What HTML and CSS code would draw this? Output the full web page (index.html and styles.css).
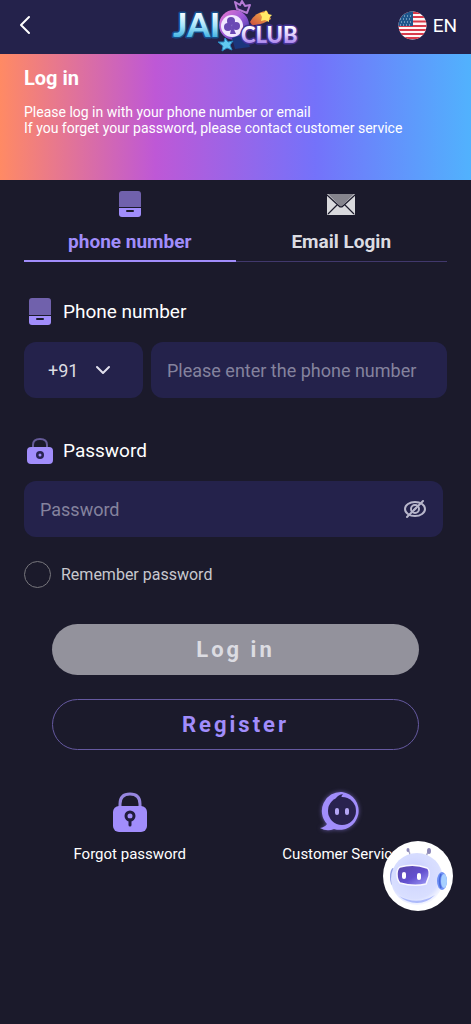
FILE: index.html
```html
<!DOCTYPE html>
<html lang="en">
<head>
    <meta charset="UTF-8">
    <meta name="viewport" content="width=device-width, initial-scale=1.0">
    <title>Log in</title>
    <link rel="stylesheet" href="styles.css">
</head>
<body>
    <header class="header">
        <button class="back-button" type="button" aria-label="Back">
            <svg width="20" height="20" viewBox="0 0 20 20"><path d="M15 2L7 10L15 18" fill="none" stroke="#fff" stroke-width="2" stroke-linecap="round" stroke-linejoin="round"/></svg>
        </button>
        <svg class="logo" width="132" height="54" viewBox="170 0 132 54" role="img" aria-label="JAIO Club">
            <defs>
                <linearGradient id="jai" x1="0" y1="0" x2="0" y2="1">
                    <stop offset="0.2" stop-color="#fff"/>
                    <stop offset="0.55" stop-color="#a5e4fb"/>
                    <stop offset="0.9" stop-color="#2ba6dc"/>
                </linearGradient>
                <linearGradient id="club" x1="0" y1="0" x2="0" y2="1">
                    <stop offset="0.2" stop-color="#fff"/>
                    <stop offset="0.55" stop-color="#dcc7fb"/>
                    <stop offset="0.9" stop-color="#9a70e8"/>
                </linearGradient>
                <linearGradient id="ring" x1="0" y1="0" x2="1" y2="1">
                    <stop offset="0" stop-color="#ee7bd0"/>
                    <stop offset="0.5" stop-color="#9b58d8"/>
                    <stop offset="1" stop-color="#27339a"/>
                </linearGradient>
                <linearGradient id="comet" x1="0" y1="1" x2="1" y2="0">
                    <stop offset="0" stop-color="#c94d40"/>
                    <stop offset="1" stop-color="#ffc247"/>
                </linearGradient>
            </defs>
            <path d="M237 9L235 2L240 5L242 1L245 6L250 5L247 13Z" fill="#292451" stroke="#b57bd6" stroke-width="2" stroke-linejoin="round"/>
            <path d="M250 22Q255 12 267 11L271 19Q263 25 252 25Z" fill="url(#comet)"/>
            <path d="M266 10L268 14L272 15L269 18L269 22L265 20L261 21L262 17L260 13L264 13Z" fill="#ffe967"/>
            <circle cx="234" cy="25" r="15" fill="url(#ring)"/>
            <circle cx="232" cy="26" r="11" fill="#f1e7ff"/>
            <g fill="#6a49b4">
                <circle cx="231" cy="21" r="4"/>
                <circle cx="228" cy="27" r="4"/>
                <circle cx="236" cy="26" r="4"/>
                <path d="M232 25L236 34H230Z"/>
            </g>
            <path d="M232 38L245 34L250 47L235 49Z" fill="#1b367d"/>
            <text class="logo-jai" x="173" y="37">JAI</text>
            <text class="logo-club" x="241" y="43">CLUB</text>
            <path d="M225 38L228 42L233 41L230 45L232 50L227 48L222 51L223 46L218 42L224 42Z" fill="#61c9f1" stroke="#2887c2"/>
        </svg>
        <button class="language-button" type="button">
            <svg width="29" height="29" viewBox="0 0 29 29" aria-hidden="true">
                <clipPath id="flag"><circle cx="14.5" cy="14.5" r="14"/></clipPath>
                <g clip-path="url(#flag)">
                    <path d="M0 0H29V29H0Z" fill="#fff5f5"/>
                    <path d="M0 2H29M0 6H29M0 10.500H29M0 15H29M0 19H29M0 23H29M0 27H29" stroke="#d83a4b" stroke-width="2.200"/>
                    <path d="M0 0H15V15H0Z" fill="#1e568c"/>
                    <path d="M3 5H14M2 8H14M3 11H14M2 14H14" stroke="#b9d4e8" stroke-width="1" stroke-dasharray="1 2"/>
                </g>
            </svg>
            <span>EN</span>
        </button>
    </header>

    <section class="banner">
        <h1>Log in</h1>
        <p>Please log in with your phone number or email</p>
        <p>If you forget your password, please contact customer service</p>
    </section>

    <main class="container">
        <div class="tabs" role="tablist">
            <button class="tab active" type="button" role="tab" aria-selected="true">
                <svg width="26" height="28" viewBox="0 0 26 28">
                    <path d="M2 17V4Q2 1 5 1H21Q24 1 24 4V17Z" fill="#7061ac"/>
                    <path d="M2 18H24V24Q24 27 21 27H5Q2 27 2 24Z" fill="#a18dfb"/>
                    <path d="M10 21H16" stroke="#1b1a2b" stroke-width="2" stroke-linecap="round"/>
                </svg>
                <span>phone number</span>
            </button>
            <button class="tab" type="button" role="tab" aria-selected="false">
                <svg width="30" height="28" viewBox="0 0 30 28">
                    <rect x="1" y="4" width="28" height="21" rx="1" fill="#d9d9dd"/>
                    <path d="M2 4H28L15 17Z" fill="#85848d"/>
                    <path d="M1 5L13 16Q15 18 17 16L29 5M2 24L11 15M28 24L19 15" fill="none" stroke="#1b1a2b" stroke-width="1.200"/>
                </svg>
                <span>Email Login</span>
            </button>
        </div>

        <form class="login-form">
            <label class="field-label" for="phone">
                <svg width="30" height="30" viewBox="0 0 30 30">
                    <path d="M4 19V5Q4 2 7 2H23Q26 2 26 5V19Z" fill="#7061ac"/>
                    <path d="M4 20H26V26Q26 29 23 29H7Q4 29 4 26Z" fill="#a18dfb"/>
                    <path d="M12 23H18" stroke="#1b1a2b" stroke-width="2" stroke-linecap="round"/>
                </svg>
                Phone number
            </label>
            <div class="phone-row">
                <div class="code-box">
                    <select aria-label="Country code">
                        <option>+91</option>
                    </select>
                    <svg class="chevron" width="16" height="16" viewBox="0 0 16 16"><path d="M2 5L8 11L14 5" fill="none" stroke="#e1e0ec" stroke-width="2" stroke-linecap="round" stroke-linejoin="round"/></svg>
                </div>
                <input class="text-input" type="tel" id="phone" placeholder="Please enter the phone number">
            </div>

            <label class="field-label" for="password">
                <svg width="30" height="30" viewBox="0 0 30 30">
                    <path d="M8 13V10Q8 4 15 4Q22 4 22 10V13" fill="none" stroke="#655a98" stroke-width="2"/>
                    <rect x="2" y="12" width="26" height="17" rx="4" fill="#a18dfb"/>
                    <circle cx="15" cy="20" r="4" fill="#292451"/>
                    <circle cx="15" cy="20" r="1.500" fill="#a18dfb"/>
                </svg>
                Password
            </label>
            <div class="password-box">
                <input type="password" id="password" placeholder="Password">
                <button class="eye-button" type="button" aria-label="Show password">
                    <svg width="24" height="24" viewBox="0 0 24 24" fill="none" stroke="#b8b7cb" stroke-width="2" stroke-linecap="round">
                        <ellipse cx="12" cy="12" rx="10" ry="7"/>
                        <circle cx="12" cy="12" r="4"/>
                        <path d="M11 13L13 11"/>
                        <path d="M4 20L20 4"/>
                    </svg>
                </button>
            </div>

            <label class="remember">
                <input type="checkbox">
                Remember password
            </label>

            <div class="button-group">
                <button class="login-button" type="submit">Log in</button>
                <button class="register-button" type="button">Register</button>
            </div>
        </form>

        <nav class="help-links">
            <a href="#">
                <svg width="42" height="42" viewBox="0 0 42 42">
                    <path d="M11 17V13Q11 3 21 3Q31 3 31 13V17" fill="none" stroke="#9686df" stroke-width="3"/>
                    <rect x="4" y="15" width="34" height="26" rx="6" fill="#a18dfb"/>
                    <circle cx="21" cy="25" r="4" fill="none" stroke="#201c3c" stroke-width="3"/>
                    <path d="M21 29V34" stroke="#201c3c" stroke-width="3" stroke-linecap="round"/>
                </svg>
                <span>Forgot password</span>
            </a>
            <a href="#">
                <svg class="service-icon" width="42" height="42" viewBox="0 0 42 42">
                    <path d="M22 1A19 19 0 1 1 14 38Q7 41 0 37Q5 36 7 33A19 19 0 0 1 22 1Z" fill="#a18dfb"/>
                    <circle cx="22" cy="20" r="14" fill="#29224f"/>
                    <path d="M15 9Q17 4 23 3Q20 6 23 7L28 9Z" fill="#29224f"/>
                    <path d="M17 19V22M27 19V22" stroke="#b4a6f5" stroke-width="4" stroke-linecap="round"/>
                </svg>
                <span>Customer Service</span>
            </a>
        </nav>
    </main>

    <button class="chat-button" type="button" aria-label="Chat">
        <svg width="70" height="70" viewBox="0 0 70 70">
            <defs>
                <radialGradient id="head" cx="0.45" cy="0.4" r="0.6">
                    <stop offset="0" stop-color="#c3caff"/>
                    <stop offset="0.55" stop-color="#d5dbff"/>
                    <stop offset="0.8" stop-color="#d9dfff"/>
                    <stop offset="1" stop-color="#f4f6ff"/>
                </radialGradient>
                <linearGradient id="visor" x1="0" y1="0" x2="1" y2="1">
                    <stop offset="0" stop-color="#5947a8"/>
                    <stop offset="0.55" stop-color="#6350cf"/>
                    <stop offset="1" stop-color="#a3a1fa"/>
                </linearGradient>
            </defs>
            <path d="M27 15Q27 11 25 9M43 16Q44 12 46 10" fill="none" stroke="#a6a5c5" stroke-width="1.500"/>
            <ellipse cx="25" cy="9" rx="1.500" ry="2" fill="#8b86b7"/>
            <ellipse cx="46" cy="10" rx="2" ry="3" fill="#8b86b7"/>
            <ellipse cx="10" cy="36" rx="3" ry="9" fill="#8e9be5"/>
            <circle cx="34" cy="38" r="26" fill="url(#head)"/>
            <path d="M16 55Q34 65 52 54Q44 62 34 62Q24 62 16 55Z" fill="#acb9fa"/>
            <path d="M17 26Q31 22 44 27Q47 29 46 35L43 43Q31 46 17 42Q14 39 14 33Q14 28 17 26Z" fill="url(#visor)" stroke="#f9f8ff" stroke-width="1.500"/>
            <rect x="19" y="31" width="4" height="7" rx="2" fill="#fff"/>
            <rect x="34" y="32" width="4" height="7" rx="2" fill="#fff"/>
            <ellipse cx="59" cy="40" rx="5" ry="9" fill="#6e8ff4"/>
            <ellipse cx="61" cy="40" rx="3" ry="7" fill="#a7d0ff"/>
            <path d="M58 33Q55 40 58 47" fill="none" stroke="#4568d9" stroke-width="1.500"/>
        </svg>
    </button>
</body>
</html>
```
FILE: styles.css
```css
* {
    box-sizing: border-box;
}
body {
    margin: 0;
    min-height: 100vh;
    background-color: #1b1a2b;
    color: #fff;
    font-family: Roboto, "Liberation Sans", sans-serif;
    font-size: 19px;
}
button, input, select {
    font-family: inherit;
    font-size: inherit;
    color: inherit;
}
button {
    padding: 0;
    border: none;
    background: none;
    cursor: pointer;
}
.header {
    display: grid;
    grid-template-columns: 1fr auto 1fr;
    align-items: center;
    height: 54px;
    padding: 0 14px;
    background-color: #24224b;
}
.back-button {
    justify-self: start;
    display: flex;
    padding-bottom: 4px;
}
.logo-jai, .logo-club {
    font-family: Lato, sans-serif;
    font-weight: 900;
    stroke-width: 3px;
    stroke-linejoin: round;
    paint-order: stroke;
}
.logo-jai {
    font-size: 33px;
    fill: url(#jai);
    stroke: #164d89;
}
.logo-club {
    font-size: 22px;
    fill: url(#club);
    stroke: #443293;
}
.language-button {
    justify-self: end;
    display: flex;
    align-items: center;
    gap: 6px;
    padding-bottom: 4px;
}
.banner {
    height: 126px;
    padding: 12px 24px;
    background: linear-gradient(90deg, #ff8a64, #be58d6 33%, #7472fa 67%, #51b2fd);
}
.banner h1 {
    margin: 0 0 14px;
    font-size: 20px;
    line-height: 24px;
}
.banner p {
    margin: 0;
    font-size: 14px;
    line-height: 16px;
}
.container {
    padding: 0 24px;
}
.tabs {
    display: flex;
}
.tab {
    flex: 1;
    display: flex;
    flex-direction: column;
    align-items: center;
    gap: 12px;
    height: 82px;
    padding-top: 10px;
    border-bottom: 1px solid #41386c;
    color: #dcdce2;
    font-weight: bold;
}
.tab.active {
    border-bottom: 2px solid #a18dfb;
    color: #a18dfb;
}
.login-form {
    padding-top: 34px;
}
.field-label {
    display: flex;
    align-items: center;
    gap: 8px;
    height: 30px;
    margin-bottom: 16px;
    padding-left: 1px;
}
.phone-row {
    display: flex;
    gap: 8px;
    margin-bottom: 37px;
}
.code-box {
    position: relative;
    width: 119px;
}
.code-box select {
    appearance: none;
    width: 100%;
    height: 56px;
    padding: 0 24px;
    border: none;
    border-radius: 12px;
    background-color: #24224b;
    color: #dcdce2;
    font-size: 18px;
}
.chevron {
    position: absolute;
    top: 20px;
    right: 32px;
    pointer-events: none;
}
.text-input {
    flex: 1;
    min-width: 0;
    height: 56px;
    padding: 0 16px;
    border: none;
    border-radius: 12px;
    background-color: #24224b;
    font-size: 18px;
}
.password-box {
    display: flex;
    align-items: center;
    height: 56px;
    margin-right: 4px;
    padding: 0 16px;
    border-radius: 12px;
    background-color: #24224b;
}
.password-box input {
    flex: 1;
    min-width: 0;
    padding: 0;
    border: none;
    background: none;
    font-size: 18px;
}
input::placeholder {
    color: #84839e;
    opacity: 1;
}
.eye-button {
    display: flex;
}
.remember {
    display: flex;
    align-items: center;
    gap: 10px;
    margin-top: 24px;
    color: #c8c8ce;
    font-size: 16px;
}
.remember input {
    appearance: none;
    width: 27px;
    height: 27px;
    margin: 0;
    border: 1px solid #77767c;
    border-radius: 50%;
}
.remember input:checked {
    background-color: #a18dfb;
}
.button-group {
    display: flex;
    flex-direction: column;
    gap: 24px;
    margin: 36px 28px 41px;
}
.login-button, .register-button {
    height: 51px;
    border-radius: 26px;
    font-size: 22px;
    font-weight: bold;
    letter-spacing: 3px;
}
.login-button {
    background-color: #93929c;
    color: #dcdce2;
}
.register-button {
    border: 1px solid #6559a0;
    color: #a18dfb;
}
.help-links {
    display: flex;
}
.help-links a {
    flex: 1;
    display: flex;
    flex-direction: column;
    align-items: center;
    gap: 12px;
    color: #fff;
    font-size: 15px;
    text-decoration: none;
}
.service-icon {
    filter: drop-shadow(0 0 2px #6559a0);
}
.chat-button {
    position: fixed;
    right: 18px;
    bottom: 113px;
    width: 70px;
    height: 70px;
    border-radius: 50%;
    background-color: #fff;
}
```
